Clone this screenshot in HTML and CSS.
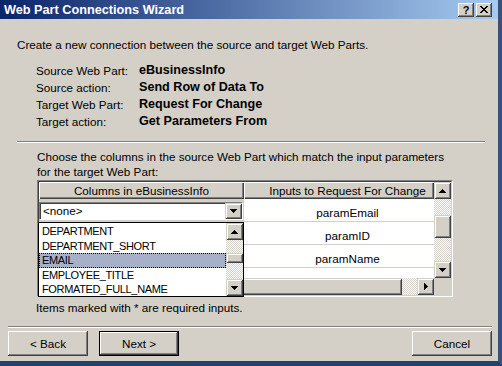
FILE: index.html
```html
<!DOCTYPE html>
<html lang="en">
<head>
  <meta charset="UTF-8">
  <title>Web Part Connections Wizard</title>
  <link rel="stylesheet" href="styles.css">
</head>
<body>
  <div class="window">
    <div class="titlebar">
      <span class="title">Web Part Connections Wizard</span>
      <span class="cap-btn">?</span>
      <span class="cap-btn"><svg width="8" height="7"><path d="M0 0h2l2 2.5L6 0h2L5 3.5 8 7H6L4 4.5 2 7H0l3-3.5z"/></svg></span>
    </div>

    <p class="intro">Create a new connection between the source and target Web Parts.</p>

    <div class="summary">
      <span>Source Web Part:</span><b>eBusinessInfo</b>
      <span>Source action:</span><b>Send Row of Data To</b>
      <span>Target Web Part:</span><b>Request For Change</b>
      <span>Target action:</span><b>Get Parameters From</b>
    </div>

    <div class="etched top"></div>

    <p class="choose">Choose the columns in the source Web Part which match the input parameters<br>for the target Web Part:</p>

    <div class="grid-frame">
      <div class="grid">
        <div class="gbody">
          <div class="hd">Columns in eBusinessInfo</div>
          <div class="hd right">Inputs to Request For Change</div>

          <div class="ccell"><div class="combo"><span class="val">&lt;none&gt;</span><span class="sbtn"><svg width="7" height="4"><path d="M0 0h7v1H6v1H5v1H4v1H3V3H2V2H1V1H0z"/></svg></span></div></div>
          <div class="pcell">paramEmail</div>

          <div class="ccell"><div class="combo"><span class="val"></span></div></div>
          <div class="pcell">paramID</div>

          <div class="ccell"><div class="combo"><span class="val"></span></div></div>
          <div class="pcell">paramName</div>

          <div class="ccell"><div class="combo"><span class="val"></span></div></div>
          <div class="pcell"></div>
        </div>

        <div class="vscroll">
          <span class="sbtn"><svg width="7" height="4"><path d="M3 0h1v1h1v1h1v1h1v1H0V3h1V2h1V1h1z"/></svg></span>
          <span class="track short"></span>
          <span class="thumb tall"></span>
          <span class="track"></span>
          <span class="sbtn"><svg width="7" height="4"><path d="M0 0h7v1H6v1H5v1H4v1H3V3H2V2H1V1H0z"/></svg></span>
        </div>

        <div class="hscroll">
          <span class="sbtn"></span>
          <span class="thumb wide"></span>
          <span class="track narrow"></span>
          <span class="sbtn"><svg width="4" height="7"><path d="M0 0h1v1h1v1h1v1h1v1H3v1H2v1H1v1H0z"/></svg></span>
        </div>

        <div class="corner"></div>
      </div>

      <div class="droplist">
        <div class="items">
          <div class="item">DEPARTMENT</div>
          <div class="item">DEPARTMENT_SHORT</div>
          <div class="item sel">EMAIL</div>
          <div class="item">EMPLOYEE_TITLE</div>
          <div class="item">FORMATED_FULL_NAME</div>
        </div>
        <div class="vscroll">
          <span class="sbtn"><svg width="7" height="4"><path d="M3 0h1v1h1v1h1v1h1v1H0V3h1V2h1V1h1z"/></svg></span>
          <span class="track gap"></span>
          <span class="thumb small"></span>
          <span class="track"></span>
          <span class="sbtn"><svg width="7" height="4"><path d="M0 0h7v1H6v1H5v1H4v1H3V3H2V2H1V1H0z"/></svg></span>
        </div>
      </div>
    </div>

    <p class="note">Items marked with * are required inputs.</p>

    <div class="etched bottom"></div>

    <div class="buttons">
      <button class="btn">&lt; Back</button>
      <button class="btn default">Next &gt;</button>
      <button class="btn cancel">Cancel</button>
    </div>
  </div>
</body>
</html>
```

FILE: styles.css
```css
* {
  box-sizing: border-box;
}

body {
  margin: 0;
  font-family: "Liberation Sans", Arial, sans-serif;
  font-size: 11.7px;
  color: #000;
  background: #fff;
}

p {
  margin: 0;
}

svg {
  display: block;
  shape-rendering: crispEdges;
}

.window {
  width: 502px;
  height: 366px;
  background: #d4d0c8;
  border-right: 4px solid #3b5078;
  border-bottom: 5px solid #23416f;
  overflow: hidden;
}

/* title bar */
.titlebar {
  height: 19px;
  display: flex;
  align-items: center;
  padding: 0 6px 0 4px;
  background: linear-gradient(to right, #0a246a, #a6caf0);
}

.title {
  flex: 1;
  color: #fff;
  font-weight: bold;
  font-size: 12.7px;
}

.cap-btn {
  width: 16px;
  height: 14px;
  margin-left: 2px;
  display: flex;
  align-items: center;
  justify-content: center;
  font-weight: bold;
  font-size: 11px;
  background: #d4d0c8;
  box-shadow: inset -1px -1px #404040, inset 1px 1px #fff, inset -2px -2px #808080;
}

/* top text */
.intro {
  margin: 18px 0 0 17px;
  line-height: 16px;
}

.summary {
  display: grid;
  grid-template-columns: 103px auto;
  margin: 9px 0 0 36px;
  line-height: 17px;
}

.summary b {
  font-size: 12.6px;
}

.etched {
  height: 2px;
  border-top: 1px solid #808080;
  border-bottom: 1px solid #fff;
}

.etched.top {
  margin: 11px 13px 0 17px;
}

.etched.bottom {
  margin: 10px 6px 0 8px;
}

.choose {
  margin: 6px 0 0 37px;
  line-height: 15px;
}

/* data grid */
.grid-frame {
  position: relative;
  width: 416px;
  height: 117px;
  margin: 1px 0 0 37px;
  border: 1px solid;
  border-color: #808080 #fff #fff #808080;
}

.grid {
  height: 100%;
  display: grid;
  grid-template-columns: 1fr 17px;
  grid-template-rows: 1fr 17px;
  border: 1px solid;
  border-color: #404040 #d4d0c8 #d4d0c8 #404040;
}

.gbody {
  display: grid;
  grid-template-columns: 205px 1fr;
  grid-template-rows: 17px;
  grid-auto-rows: 23px;
  overflow: hidden;
  background: #d4d0c8;
}

.hd {
  line-height: 17px;
  text-align: center;
  white-space: nowrap;
  overflow: hidden;
  background: #d4d0c8;
  box-shadow: inset 1px 1px #fff, inset -1px -1px #404040, inset -2px -2px #808080;
}

.hd.right {
  padding-left: 17px;
}

.ccell {
  padding: 3px 1px 2px 0;
}

.combo {
  height: 18px;
  display: flex;
  background: #fff;
  border: 1px solid;
  border-color: #808080 #fff #fff #808080;
  box-shadow: inset 1px 1px #404040;
}

.combo .val {
  flex: 1;
  padding-left: 3px;
  line-height: 16px;
}

.pcell {
  background: #fff;
  border-bottom: 1px solid #d4d0c8;
  text-align: center;
  padding: 6px 0 0 17px;
  line-height: 16px;
}

/* scrollbars */
.sbtn {
  flex: none;
  width: 17px;
  height: 17px;
  display: flex;
  align-items: center;
  justify-content: center;
  background: #d4d0c8;
  box-shadow: inset 1px 1px #d4d0c8, inset -1px -1px #404040, inset 2px 2px #fff, inset -2px -2px #808080;
}

.combo .sbtn {
  height: 16px;
}

.track {
  flex: 1;
  background-image: repeating-conic-gradient(#fff 0 25%, #d4d0c8 0 50%);
  background-size: 2px 2px;
}

.thumb {
  flex: none;
  background: #d4d0c8;
  box-shadow: inset 1px 1px #d4d0c8, inset -1px -1px #404040, inset 2px 2px #fff, inset -2px -2px #808080;
}

.vscroll {
  display: flex;
  flex-direction: column;
}

.track.short {
  flex: none;
  height: 16px;
}

.thumb.tall {
  height: 23px;
}

.hscroll {
  display: flex;
}

.thumb.wide {
  flex: 1;
}

.track.narrow {
  flex: none;
  width: 15px;
}

.corner {
  background: #d4d0c8;
}

/* open dropdown list */
.droplist {
  position: absolute;
  left: 0;
  top: 41px;
  width: 206px;
  height: 75px;
  display: flex;
  border: 1px solid #000;
  background: #fff;
}

.items {
  flex: 1;
  padding-top: 1px;
}

.item {
  line-height: 14.5px;
  padding-left: 3px;
  font-size: 11px;
  letter-spacing: -0.35px;
  white-space: nowrap;
}

.item.sel {
  background: #a7b0c9;
  outline: 1px dotted #000;
  outline-offset: -1px;
}

.track.gap {
  flex: none;
  height: 13px;
}

.thumb.small {
  height: 10px;
}

.note {
  margin: 3px 0 0 36px;
  line-height: 16px;
}

/* bottom buttons */
.buttons {
  display: flex;
  margin-top: 3px;
  padding: 0 6px 0 8px;
}

.btn {
  width: 80px;
  height: 25px;
  padding: 0;
  border: none;
  font: inherit;
  color: #000;
  background: #d4d0c8;
  box-shadow: inset -1px -1px #404040, inset 1px 1px #fff, inset -2px -2px #808080;
}

.btn.default {
  margin-left: 11px;
  border: 1px solid #000;
}

.btn.cancel {
  margin-left: auto;
}
```
